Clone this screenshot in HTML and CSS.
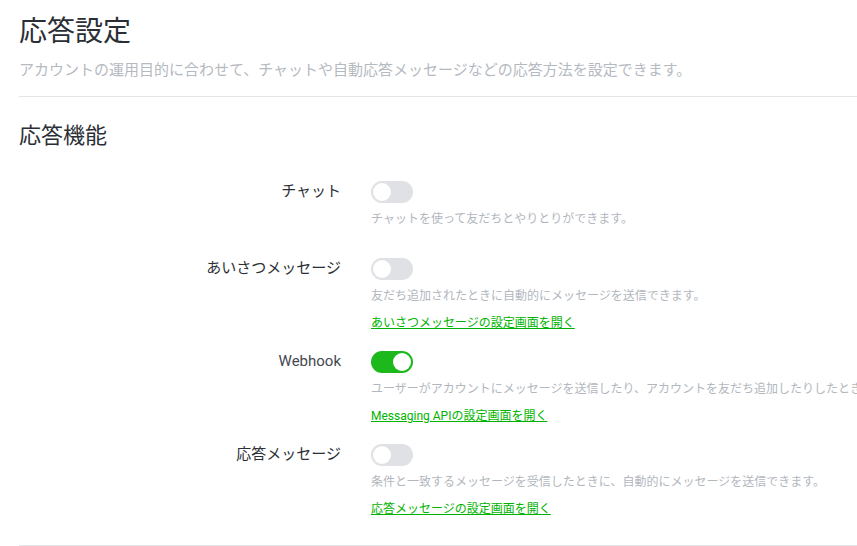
FILE: index.html
```html
<!DOCTYPE html>
<html lang="ja">
<head>
<meta charset="utf-8">
<link rel="stylesheet" href="styles.css">
</head>
<body>
<div class="page">
  <header class="page-head">
    <h1 class="title">応答設定</h1>
    <p class="subtitle">アカウントの運用目的に合わせて、チャットや自動応答メッセージなどの応答方法を設定できます。</p>
  </header>
  <section class="section">
    <h2 class="section-title">応答機能</h2>
    <div class="rows">
      <div class="row">
        <div class="label">チャット</div>
        <div class="control">
          <span class="toggle"><span class="knob"></span></span>
          <p class="desc">チャットを使って友だちとやりとりができます。</p>
        </div>
      </div>
      <div class="row has-link">
        <div class="label">あいさつメッセージ</div>
        <div class="control">
          <span class="toggle"><span class="knob"></span></span>
          <p class="desc">友だち追加されたときに自動的にメッセージを送信できます。</p>
          <a class="link" href="#">あいさつメッセージの設定画面を開く</a>
        </div>
      </div>
      <div class="row has-link">
        <div class="label latin">Webhook</div>
        <div class="control">
          <span class="toggle on"><span class="knob"></span></span>
          <p class="desc">ユーザーがアカウントにメッセージを送信したり、アカウントを友だち追加したりしたときなどに、Webhook URLにイベントが送信されます。</p>
          <a class="link" href="#">Messaging APIの設定画面を開く</a>
        </div>
      </div>
      <div class="row has-link">
        <div class="label">応答メッセージ</div>
        <div class="control">
          <span class="toggle"><span class="knob"></span></span>
          <p class="desc">条件と一致するメッセージを受信したときに、自動的にメッセージを送信できます。</p>
          <a class="link" href="#">応答メッセージの設定画面を開く</a>
        </div>
      </div>
    </div>
  </section>
</div>
</body>
</html>
```

FILE: styles.css
```css
html, body {
  margin: 0;
  padding: 0;
  background: #ffffff;
  overflow: hidden;
}
body {
  font-family: "Roboto", "Noto Sans CJK JP", sans-serif;
  color: #2c3036;
}
.page {
  width: 1100px;
  padding: 0 0 0 19px;
}
.page-head {
  border-bottom: 1px solid #e4e5e7;
  padding: 14px 0 15px;
}
.title {
  margin: 0;
  font-size: 28px;
  font-weight: 400;
  line-height: 36px;
  color: #2b2f35;
}
.subtitle {
  margin: 9px 0 0;
  font-size: 15px;
  line-height: 22px;
  color: #b5bac1;
}
.section {
  border-bottom: 1px solid #e4e5e7;
  padding: 23px 0 27px;
}
.section-title {
  margin: 0;
  font-size: 22px;
  font-weight: 400;
  line-height: 32px;
  color: #2b2f35;
}
.rows {
  display: flex;
  flex-direction: column;
  margin-top: 29px;
}
.row {
  display: grid;
  grid-template-columns: 322px 1fr;
  column-gap: 30px;
  padding-bottom: 30px;
}
.row.has-link {
  padding-bottom: 19px;
}
.row:last-child {
  padding-bottom: 0;
}
.label {
  text-align: right;
  font-size: 15px;
  line-height: 20px;
  color: #2c3036;
}
.label.latin {
  color: #454950;
}
.control {
  display: flex;
  flex-direction: column;
  align-items: flex-start;
}
.toggle {
  position: relative;
  display: block;
  width: 42px;
  height: 22px;
  border-radius: 11px;
  background: #dfe1e5;
}
.toggle .knob {
  position: absolute;
  top: 2px;
  left: 2px;
  width: 18px;
  height: 18px;
  border-radius: 50%;
  background: #ffffff;
}
.toggle.on {
  background: #1cb81c;
}
.toggle.on .knob {
  left: 22px;
}
.desc {
  margin: 7px 0 0;
  font-size: 12px;
  line-height: 18px;
  color: #b2b7be;
  white-space: nowrap;
}
.link {
  margin-top: 9px;
  font-size: 12px;
  line-height: 18px;
  color: #00b300;
  text-decoration: underline;
}
```
